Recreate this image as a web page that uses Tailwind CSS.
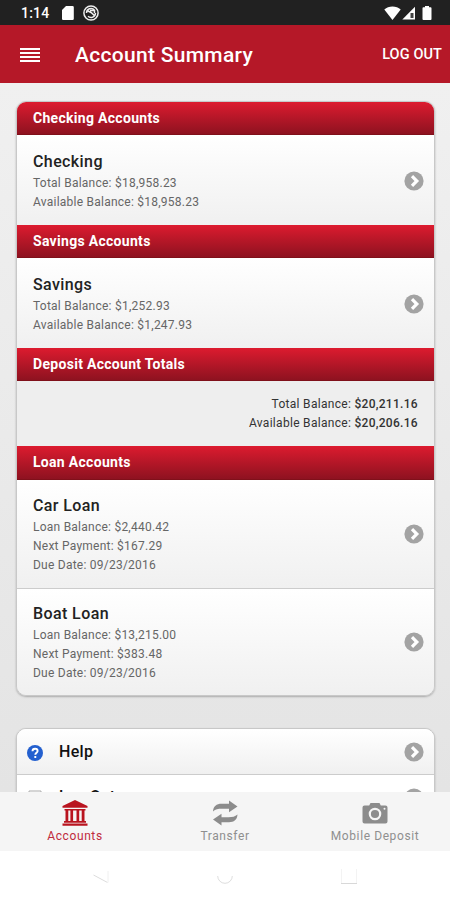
<!DOCTYPE html>
<html lang="en">
<head>
    <meta charset="UTF-8">
    <meta name="viewport" content="width=device-width, initial-scale=1.0">
    <title>Account Summary</title>
    <script src="https://cdn.jsdelivr.net/npm/@tailwindcss/browser@4"></script>
</head>
<body class="flex flex-col h-[900px] w-[450px] overflow-hidden bg-white font-[Roboto,sans-serif]">
    <!-- Icons used more than once -->
    <svg class="hidden">
        <symbol id="chevron" viewBox="0 0 20 20">
            <circle cx="10" cy="10" r="9.6" fill="#a3a3a3"/>
            <path d="M8 5.2l4.8 4.8L8 14.8" fill="none" stroke="#fff" stroke-width="3.2"/>
        </symbol>
    </svg>

    <!-- Status bar -->
    <div class="flex h-[25px] shrink-0 items-center bg-[#212121] pl-[21px] pr-[18px] text-white">
        <span class="w-[40px] text-[14px] font-medium leading-none tracking-[0.2px]">1:14</span>
        <svg class="h-[14px] w-[13px]" viewBox="0 0 13 14"><path d="M5 0h6.500a1.300 1.300 0 0 1 1.300 1.300v11.400a1.300 1.300 0 0 1-1.300 1.300h-9A1.300 1.300 0 0 1 1 12.700V4z" fill="#fff"/></svg>
        <svg class="ml-[9px] mt-[1px] h-4 w-4" viewBox="0 0 16 16" fill="none" stroke="#eee">
            <circle cx="8" cy="8" r="7.1" stroke-width="1.5"/>
            <path d="M3.500 8a4.500 4.500 0 0 1 8-2.800M12.500 8a4.500 4.500 0 0 1-7.500 3.300M4 5.500l4 2 4 3.500M7 5.500h4.500v2.500" stroke-width="1.5"/>
        </svg>
        <svg class="ml-auto h-[14px] w-[17px]" viewBox="0 0 17 14"><path d="M8.500 14L.3 3.500C2.500 1.500 5.300.4 8.500.4s6 1.100 8.200 3.100z" fill="#fff"/></svg>
        <svg class="h-[14px] w-[15px]" viewBox="0 0 15 14"><path d="M14 .8V13.500H1.300z" fill="#fff"/><path d="M9.500 7h3v5h-3z" fill="#444"/></svg>
        <svg class="ml-[6px] h-[14px] w-[10px]" viewBox="0 0 10 14"><path d="M3 0h4v1.300h1.600a.9.900 0 0 1 .9.900v10.900a.9.900 0 0 1-.9.900H1.400a.9.900 0 0 1-.9-.9V2.200a.9.900 0 0 1 .9-.9H3z" fill="#fff"/></svg>
    </div>

    <!-- App bar -->
    <header class="flex h-[58px] shrink-0 items-center bg-[#b51828] pl-5 pr-[8px] pt-[2px] text-white">
        <div class="flex w-[55px] flex-col gap-[2px]">
            <div class="h-[2px] w-5 bg-white"></div>
            <div class="h-[2px] w-5 bg-white"></div>
            <div class="h-[2px] w-5 bg-white"></div>
            <div class="h-[2px] w-5 bg-white"></div>
        </div>
        <h1 class="pt-[2px] text-[21px] font-medium tracking-[0.3px]">Account Summary</h1>
        <a href="#" class="ml-auto text-[14.5px] font-medium tracking-[0.1px]">LOG OUT</a>
    </header>

    <!-- Content -->
    <main class="flex-1 overflow-hidden bg-linear-to-b from-[#f0f0f0] to-[#e4e4e4] pl-4 pr-[15px] pt-[18px]">
        <section class="flex h-[595px] flex-col overflow-hidden rounded-[10px] border border-[#c8c8c8] shadow-[0_1px_2px_#aaa]">
            <h2 class="h-[33px] shrink-0 border-b border-[#80101a] bg-linear-to-b from-[#dd1b2f] to-[#8e1220] pl-4 text-[14px] font-bold leading-[33px] tracking-[0.3px] text-white">Checking Accounts</h2>
            <div class="flex h-[90px] shrink-0 items-center justify-between bg-linear-to-b from-white to-[#f0f0f0] pl-4 pr-[10px] pt-px">
                <div class="text-[12px] leading-[19px] tracking-[0.24px] text-[#666]">
                    <h3 class="text-[16px] font-medium leading-[24px] text-[#222] tracking-[0.4px]">Checking</h3>
                    <p>Total Balance: $18,958.23</p>
                    <p>Available Balance: $18,958.23</p>
                </div>
                <svg class="h-5 w-5"><use href="#chevron"/></svg>
            </div>

            <h2 class="h-[33px] shrink-0 border-b border-[#80101a] bg-linear-to-b from-[#dd1b2f] to-[#8e1220] pl-4 text-[14px] font-bold leading-[33px] tracking-[0.3px] text-white">Savings Accounts</h2>
            <div class="flex h-[90px] shrink-0 items-center justify-between bg-linear-to-b from-white to-[#f0f0f0] pl-4 pr-[10px] pt-px">
                <div class="text-[12px] leading-[19px] tracking-[0.24px] text-[#666]">
                    <h3 class="text-[16px] font-medium leading-[24px] text-[#222] tracking-[0.4px]">Savings</h3>
                    <p>Total Balance: $1,252.93</p>
                    <p>Available Balance: $1,247.93</p>
                </div>
                <svg class="h-5 w-5"><use href="#chevron"/></svg>
            </div>

            <h2 class="h-[33px] shrink-0 border-b border-[#80101a] bg-linear-to-b from-[#dd1b2f] to-[#8e1220] pl-4 text-[14px] font-bold leading-[33px] tracking-[0.3px] text-white">Deposit Account Totals</h2>
            <div class="h-[65px] shrink-0 bg-[#eee] pr-4 pt-[14px] text-right text-[12px] leading-[19px] tracking-[0.3px] text-[#333]">
                <p>Total Balance: <b class="font-medium">$20,211.16</b></p>
                <p>Available Balance: <b class="font-medium">$20,206.16</b></p>
            </div>

            <h2 class="h-[34px] shrink-0 border-b border-[#80101a] bg-linear-to-b from-[#dd1b2f] to-[#8e1220] pl-4 text-[14px] font-bold leading-[33px] tracking-[0.3px] text-white">Loan Accounts</h2>
            <div class="flex h-[109px] shrink-0 items-center justify-between border-b border-[#ccc] bg-linear-to-b from-white to-[#f0f0f0] pl-4 pr-[10px]">
                <div class="text-[12px] leading-[19px] tracking-[0.24px] text-[#666]">
                    <h3 class="text-[16px] font-medium leading-[24px] text-[#222] tracking-[0.4px]">Car Loan</h3>
                    <p>Loan Balance: $2,440.42</p>
                    <p>Next Payment: $167.29</p>
                    <p>Due Date: 09/23/2016</p>
                </div>
                <svg class="h-5 w-5"><use href="#chevron"/></svg>
            </div>
            <div class="flex flex-1 items-center justify-between bg-linear-to-b from-white to-[#f0f0f0] pl-4 pr-[10px]">
                <div class="text-[12px] leading-[19px] tracking-[0.24px] text-[#666]">
                    <h3 class="text-[16px] font-medium leading-[24px] text-[#222] tracking-[0.4px]">Boat Loan</h3>
                    <p>Loan Balance: $13,215.00</p>
                    <p>Next Payment: $383.48</p>
                    <p>Due Date: 09/23/2016</p>
                </div>
                <svg class="h-5 w-5"><use href="#chevron"/></svg>
            </div>
        </section>

        <section class="mt-[32px] overflow-hidden rounded-[10px] border border-[#c8c8c8] bg-white shadow-[0_1px_2px_#aaa]">
            <div class="flex h-[46px] items-center border-b border-[#ccc] bg-linear-to-b from-white to-[#f0f0f0] pl-[10px] pr-[10px]">
                <svg class="mt-[3px] h-4 w-4" viewBox="0 0 16 16">
                    <circle cx="8" cy="8" r="8" fill="#2460cf"/>
                    <path d="M5.500 6.200C5.500 4.600 6.600 3.700 8.100 3.700s2.500.9 2.500 2.200c0 1.800-2.300 1.800-2.300 3.900M8.300 11v2" fill="none" stroke="#fff" stroke-width="1.900"/>
                </svg>
                <span class="ml-4 text-[16px] font-medium tracking-[0.3px] text-[#111]">Help</span>
                <svg class="ml-auto h-5 w-5"><use href="#chevron"/></svg>
            </div>
            <div class="flex h-[46px] items-center pl-[10px] pr-[10px]">
                <svg class="h-4 w-4" viewBox="0 0 16 16"><path d="M2 1h12v14H2z" fill="none" stroke="#aaa" stroke-width="1"/></svg>
                <span class="mb-[3px] ml-4 text-[16px] font-medium text-[#111]">Log Out</span>
                <svg class="ml-auto h-5 w-5"><use href="#chevron"/></svg>
            </div>
        </section>
    </main>

    <!-- Tab bar -->
    <nav class="grid h-[59px] shrink-0 grid-cols-3 bg-[#f5f5f5] text-[12px] leading-[14px] tracking-[0.6px] text-[#8f8f8f]">
        <a href="#" class="flex flex-col items-center pt-[8px] text-[#c02a3c]">
            <svg class="h-[26px] w-[26px]" viewBox="0 0 26 26" fill="#b9141f">
                <path d="M13 0l12.500 6v1.800H.5V6zM2.500 9h21v1.500h-21zM3.500 10h2.800v11H3.500zM8.400 10h2.700v11H8.400zM14.500 10h2.700v11h-2.700zM19.700 10h2.800v11h-2.800zM2 21h22v1.800H2zM.5 23.500h25v2.200H.5z"/>
            </svg>
            <span class="mt-[3px]">Accounts</span>
        </a>
        <a href="#" class="flex flex-col items-center pt-[8px]">
            <svg class="h-[26px] w-[28px]" viewBox="0 0 28 26" fill="#8c8c8c">
                <path d="M2 11.500C2.300 6.300 5.500 3.800 10.500 3.800H18V.6l8.500 5.900-8.500 5.800V8.800h-7c-4 0-6.500.5-9 2.700z"/>
                <path d="M26.500 14.500c-.3 5.200-3.500 7.700-8.500 7.700h-7.500v3.200L2 19.500l8.500-5.800v3.500h7c4 0 6.500-.5 9-2.700z"/>
            </svg>
            <span class="mt-[3px]">Transfer</span>
        </a>
        <a href="#" class="flex flex-col items-center pt-[8px]">
            <svg class="h-[26px] w-[26px]" viewBox="0 0 26 26">
                <path d="M2.500 5.500h4.700L8.500 3h9l1.300 2.500h4.700a2 2 0 0 1 2 2v14a2 2 0 0 1-2 2h-21a2 2 0 0 1-2-2v-14a2 2 0 0 1 2-2z" fill="#8c8c8c"/>
                <circle cx="13" cy="14" r="5.200" fill="#8c8c8c" stroke="#f5f5f5" stroke-width="2.200"/>
                <circle cx="22.500" cy="8.700" r="1" fill="#f5f5f5"/>
            </svg>
            <span class="mt-[3px]">Mobile Deposit</span>
        </a>
    </nav>

    <!-- System buttons -->
    <div class="grid h-[49px] shrink-0 grid-cols-[200px_50px_1fr] items-center bg-white">
        <svg class="mt-[4px] ml-[93px] h-4 w-4" viewBox="0 0 16 16" fill="none"><path d="M.5 5L14.500 12.500" stroke="#dcdcdc"/><path d="M15 12.500V1" stroke="#f0f0f0"/></svg>
        <svg class="mt-[3px] mx-auto h-4 w-4" viewBox="0 0 16 16" fill="none" stroke="#dedede"><path d="M.7 7a7.300 7.300 0 0 0 14.600 0"/></svg>
        <svg class="mt-[2px] ml-[90px] h-4 w-[18px]" viewBox="0 0 18 16" fill="none"><path d="M1.500 0v14M16.500 0v14" stroke="#f3f3f3"/><path d="M1 14.500h16" stroke="#d8d8d8"/></svg>
    </div>
</body>
</html>
